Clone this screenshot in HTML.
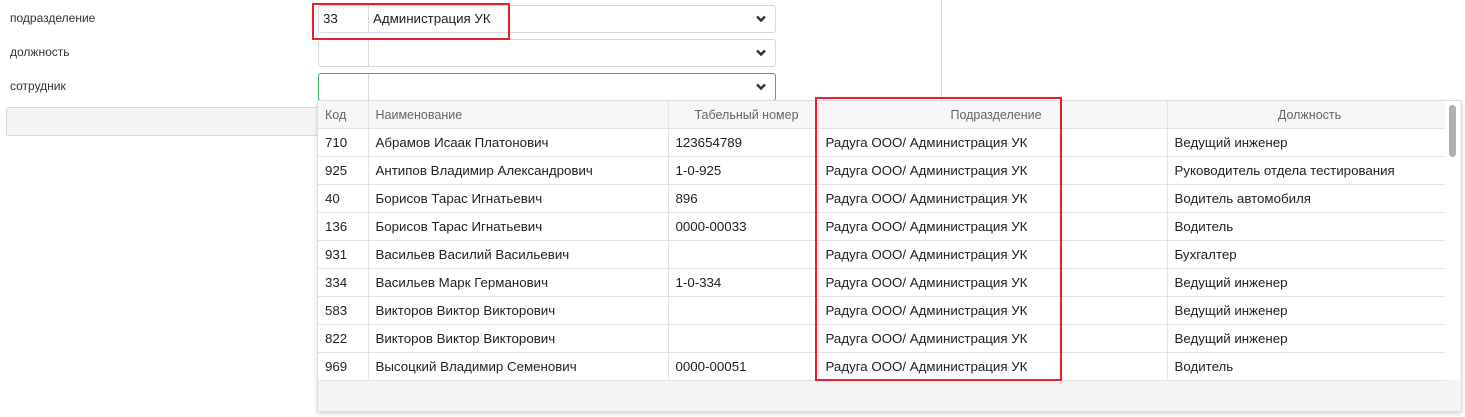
<!DOCTYPE html>
<html><head><meta charset="utf-8"><style>
body{margin:0;width:1465px;height:417px;background:#fff;font-family:"Liberation Sans","DejaVu Sans",sans-serif;font-size:13.3px;color:#222;position:relative;overflow:hidden}
.a{position:absolute}
.lbl{left:10px;font-size:12px;color:#333}
.inp{left:318px;width:456px;height:26px;border:1px solid #d8d8e0;border-radius:3px;background:#fff}
.inp .sep{position:absolute;left:49px;top:0;bottom:0;border-left:1px solid #d8d8e0}
.inp .chev{position:absolute;right:8px;top:8px}
table{border-collapse:collapse;table-layout:fixed}
td,th{height:27px;border-right:1px solid #e4e4e8;border-bottom:1px solid #e4e4e8;padding:0 0 0 7px;white-space:nowrap;overflow:hidden;font-weight:normal;text-align:left}
th{background:#f7f7f8;color:#666;font-size:12.5px}
</style></head><body>
<div class="a" style="left:941px;top:0;height:100px;border-left:1px solid #d8dce6"></div>
<div class="a lbl" style="top:11px">подразделение</div>
<div class="a lbl" style="top:45px">должность</div>
<div class="a lbl" style="top:79px">сотрудник</div>
<div class="a inp" style="top:5px"><span class="a" style="left:4px;top:5px">33</span><div class="sep"></div><span class="a" style="left:54px;top:5px">Администрация УК</span><svg class="chev" width="12" height="10"><path d="M2 2.5l4 4 4-4" stroke="#333" stroke-width="2.4" fill="none"/></svg></div>
<div class="a inp" style="top:39px"><div class="sep"></div><svg class="chev" width="12" height="10"><path d="M2 2.5l4 4 4-4" stroke="#333" stroke-width="2.4" fill="none"/></svg></div>
<div class="a inp" style="top:73px;border-color:#3cb371"><div class="sep"></div><svg class="chev" width="12" height="10"><path d="M2 2.5l4 4 4-4" stroke="#333" stroke-width="2.4" fill="none"/></svg></div>
<div class="a" style="left:6px;top:107px;width:320px;height:27px;border:1px solid #d8d8e0;border-radius:3px;background:#f4f4f5"></div>
<div class="a" style="left:317px;top:100px;width:1143px;height:310px;background:#f4f4f5;border:1px solid #dcdce2;box-shadow:0 2px 4px rgba(0,0,0,.15)">
<table style="background:#fff;width:1127px">
<colgroup><col style="width:50px"><col style="width:300px"><col style="width:150px"><col style="width:349px"><col style="width:278px"></colgroup>
<tr><th>Код</th><th>Наименование</th><th style="text-align:center">Табельный номер</th><th style="text-align:center">Подразделение</th><th style="text-align:center">Должность</th></tr>
<tr><td>710</td><td>Абрамов Исаак Платонович</td><td>123654789</td><td>Радуга ООО/ Администрация УК</td><td>Ведущий инженер</td></tr>
<tr><td>925</td><td>Антипов Владимир Александрович</td><td>1-0-925</td><td>Радуга ООО/ Администрация УК</td><td>Руководитель отдела тестирования</td></tr>
<tr><td>40</td><td>Борисов Тарас Игнатьевич</td><td>896</td><td>Радуга ООО/ Администрация УК</td><td>Водитель автомобиля</td></tr>
<tr><td>136</td><td>Борисов Тарас Игнатьевич</td><td>0000-00033</td><td>Радуга ООО/ Администрация УК</td><td>Водитель</td></tr>
<tr><td>931</td><td>Васильев Василий Васильевич</td><td></td><td>Радуга ООО/ Администрация УК</td><td>Бухгалтер</td></tr>
<tr><td>334</td><td>Васильев Марк Германович</td><td>1-0-334</td><td>Радуга ООО/ Администрация УК</td><td>Ведущий инженер</td></tr>
<tr><td>583</td><td>Викторов Виктор Викторович</td><td></td><td>Радуга ООО/ Администрация УК</td><td>Ведущий инженер</td></tr>
<tr><td>822</td><td>Викторов Виктор Викторович</td><td></td><td>Радуга ООО/ Администрация УК</td><td>Ведущий инженер</td></tr>
<tr><td>969</td><td>Высоцкий Владимир Семенович</td><td>0000-00051</td><td>Радуга ООО/ Администрация УК</td><td>Водитель</td></tr>
</table>
<div class="a" style="left:1127px;top:0;width:15px;height:279px;background:#fff"></div>
<div class="a" style="left:1131px;top:4px;width:7px;height:52px;background:#b0b0b4;border-radius:4px"></div>
</div>
<div class="a" style="left:312px;top:3px;width:194px;height:33px;border:2px solid #e8202a"></div>
<div class="a" style="left:815px;top:97px;width:243px;height:280px;border:2px solid #e8202a"></div>
</body></html>
